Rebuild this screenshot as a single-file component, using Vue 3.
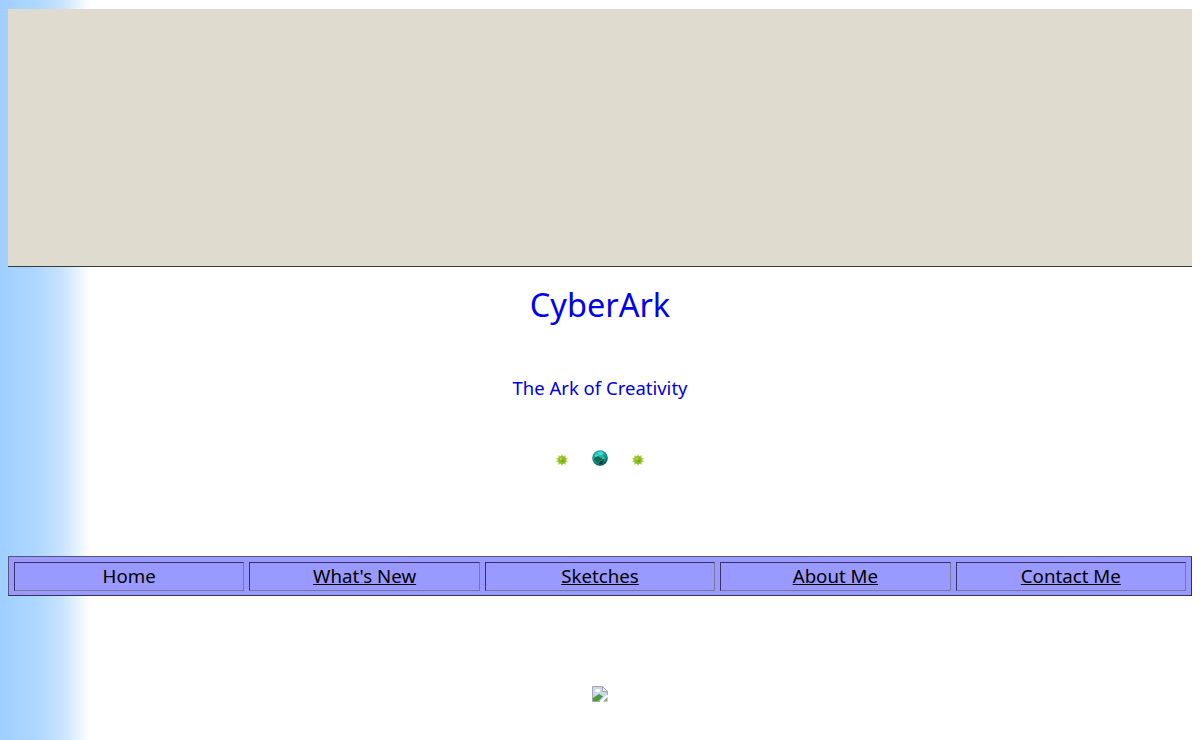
<template>
  <div class="page">
    <div class="banner"></div>
    <h1 class="title">CyberArk</h1>
    <p class="tagline">The Ark of Creativity</p>
    <div class="ornaments">
      <svg class="spark" width="12" height="12" viewBox="0 0 12 12">
        <path
          d="M6 0 7.2 2.6 9.8 1 9.4 3.8 12 4.6 10 6 12 7.6 9.4 8.2 10 11 7.4 9.6 6 12 4.6 9.6 2 11 2.6 8.2 0 7.6 2 6 0 4.6 2.6 3.8 2.2 1 4.8 2.6Z"
          fill="#a8d048"
        />
        <circle cx="6" cy="6" r="3.8" fill="#8fbe22" />
        <circle cx="4.8" cy="4.8" r="1.1" fill="#b8e04e" />
        <circle cx="7" cy="7" r="1.2" fill="#76a416" />
      </svg>
      <svg class="globe" width="16" height="16" viewBox="0 0 16 16">
        <defs>
          <radialGradient id="globeFill" cx="0.4" cy="0.3" r="0.8">
            <stop offset="0" stop-color="#2cc4b8" />
            <stop offset="0.65" stop-color="#128f88" />
            <stop offset="1" stop-color="#04222a" />
          </radialGradient>
        </defs>
        <circle cx="8" cy="8" r="7.8" fill="url(#globeFill)" />
        <path d="M2 8 6 6 9 8 13 6 12 10 8 10 6 13 3 11Z" fill="#0b6b5a" />
        <path d="M5 2.5 10 1.5 12 4 8 5.5Z" fill="#3fdcd0" />
        <path d="M8 11 12 10 10 14 7 14Z" fill="#063c3c" />
        <path d="M3 5 5 4 6 6 3.5 7Z" fill="#4de0c8" />
        <path d="M10 7 13 6.5 12 9 10 9Z" fill="#38c8b0" />
      </svg>
      <svg class="spark" width="12" height="12" viewBox="0 0 12 12">
        <path
          d="M6 0 7.2 2.6 9.8 1 9.4 3.8 12 4.6 10 6 12 7.6 9.4 8.2 10 11 7.4 9.6 6 12 4.6 9.6 2 11 2.6 8.2 0 7.6 2 6 0 4.6 2.6 3.8 2.2 1 4.8 2.6Z"
          fill="#a8d048"
        />
        <circle cx="6" cy="6" r="3.8" fill="#8fbe22" />
        <circle cx="4.8" cy="4.8" r="1.1" fill="#b8e04e" />
        <circle cx="7" cy="7" r="1.2" fill="#76a416" />
      </svg>
    </div>
    <nav class="nav">
      <div v-for="item in links" :key="item.label" class="cell">
        <a v-if="item.linked" href="#" class="link">{{ item.label }}</a>
        <span v-else class="link">{{ item.label }}</span>
      </div>
    </nav>
    <div class="broken">
      <svg width="16" height="16" viewBox="0 0 16 16">
        <path d="M.5.5H10.5L15.5 5.5V10L10 15.5H.5Z" fill="#c9d6ee" stroke="#a6a6a6" />
        <path d="M10.5.5V5.5H15.5Z" fill="#f2f2f2" stroke="#a6a6a6" />
        <path d="M3 4.5C3 3 6 2.5 8 3.5 9 5 7 6.5 5 6.2 3.5 6 3 5.4 3 4.5Z" fill="#fff" />
        <path d="M1 15V12L7 8 11 10.5 6.5 15Z" fill="#4f9a3c" />
        <path d="M8 15 15 8.5 16 9.5V16H8Z" fill="#fff" />
        <path d="M11 15.5 15.5 11V15.5Z" fill="#8f9a8c" />
      </svg>
    </div>
  </div>
</template>

<script setup>
const links = [
  { label: 'Home', linked: false },
  { label: "What's New", linked: true },
  { label: 'Sketches', linked: true },
  { label: 'About Me', linked: true },
  { label: 'Contact Me', linked: true }
]
</script>

<style>
html,
body {
  margin: 0;
  height: 100%;
  background: #fff;
}
body {
  background-image: linear-gradient(90deg, #9fcfff 0, #aed7ff 36px, #c8e3ff 62px, #e6f3ff 78px, #fff 90px);
  background-size: 100% 100%;
  overflow: hidden;
}
</style>

<style scoped>
.page {
  height: 740px;
  box-sizing: border-box;
  padding: 9px 8px 0;
  font-family: "Noto Sans", "Open Sans", sans-serif;
}
.banner {
  height: 257px;
  background: #dfdbcf;
  border-bottom: 1px solid #3a3a3a;
}
.title {
  margin: 15px 0 0;
  height: 45px;
  line-height: 45px;
  font-size: 32.5px;
  font-weight: 400;
  text-align: center;
  color: #0000ee;
}
.tagline {
  margin: 48px 0 0;
  height: 26px;
  line-height: 26px;
  font-size: 18.5px;
  text-align: center;
  color: #0000dd;
}
.ornaments {
  margin-top: 48px;
  height: 20px;
  display: flex;
  justify-content: center;
  align-items: center;
  gap: 24px;
}
.spark {
  margin-top: 2px;
}
.globe {
  margin-top: -2px;
}
.nav {
  margin-top: 87px;
  height: 40px;
  box-sizing: border-box;
  padding: 5px;
  display: grid;
  grid-template-columns: repeat(5, 1fr);
  gap: 5px;
  background: #9999ff;
  border: 1px solid;
  border-color: #555577 #333355 #333355 #555577;
}
.cell {
  box-sizing: border-box;
  display: flex;
  align-items: center;
  justify-content: center;
  padding-bottom: 2px;
  border: 1px solid;
  border-color: #333366 #77779f #77779f #333366;
}
.link {
  font-size: 18.7px;
  color: #000;
}
a.link {
  text-decoration: underline;
}
.broken {
  margin-top: 90px;
  display: flex;
  justify-content: center;
}
.broken svg {
  display: block;
}
</style>
